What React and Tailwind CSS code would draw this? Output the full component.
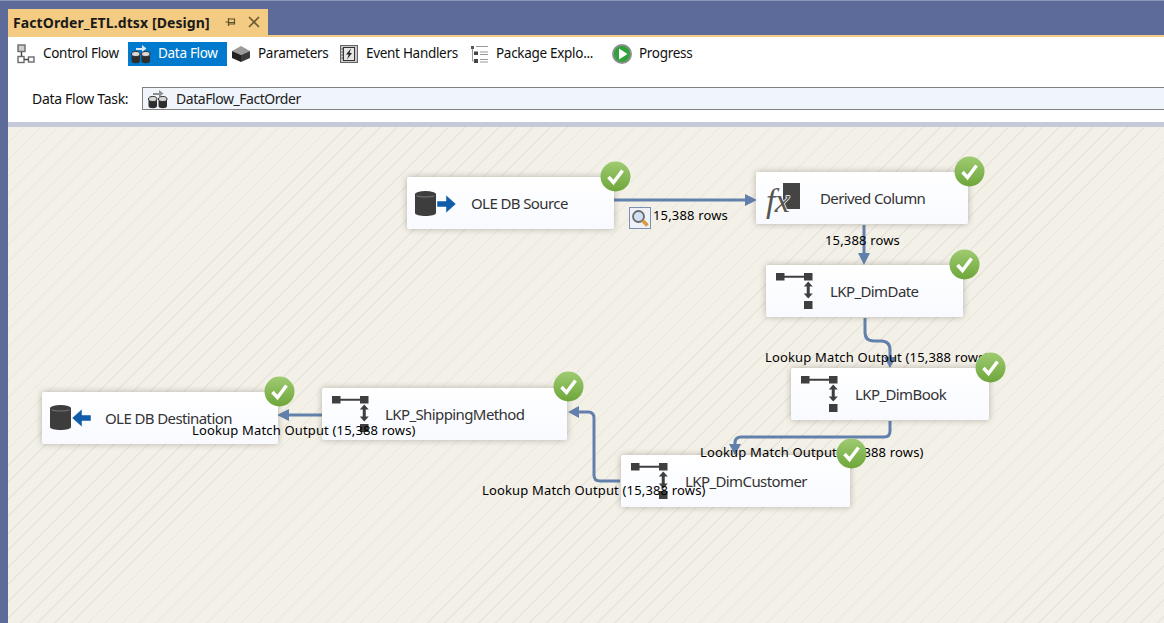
import React from "react";

const Cyl = ({ x = 0, y = 0, w = 14, h = 18, c = "#3a3a3a" }) => (
  <g>
    <path d={`M${x} ${y + 3}v${h - 6}c0 4 ${w} 4 ${w} 0v-${h - 6}z`} fill={c} />
    <ellipse cx={x + w / 2} cy={y + 3} rx={w / 2} ry={3} fill={c} />
    <path d={`M${x + 1.5} ${y + 4.5}c1 2 ${w - 4} 2 ${w - 3} 0`} fill="none" stroke="#8c8c8c" strokeWidth="0.8" />
  </g>
);

const ControlFlowIcon = () => (
  <svg width="18" height="20" viewBox="0 0 18 20" className="shrink-0">
    <g fill="#fff" stroke="#6a6a6a" strokeWidth="1.4">
      <rect x="1" y="1" width="7" height="6.5" fill="#cfcfcf" />
      <rect x="1" y="12.5" width="6" height="6" />
      <rect x="11.5" y="13" width="5.5" height="5" />
    </g>
    <path d="M4.5 8v4.5M7 15.5h4.5" stroke="#444" strokeWidth="1.4" />
  </svg>
);

const DataFlowIcon = ({ light }) => (
  <svg width="20" height="20" viewBox="0 0 20 20" className="shrink-0">
    <path d="M5 4h6V1l4.5 3.5L11 8V6H5z" fill={light ? "#dfe8f2" : "#8f8f8f"} />
    <g>
      <path d="M0.5 10v7c0 3 8.500 3 8.500 0v-7z" fill="#2e2e2e" />
      <ellipse cx="4.750" cy="10" rx="4.250" ry="2.500" fill="#d8d8d8" stroke="#2e2e2e" />
      <path d="M10.500 10v7c0 3 8.500 3 8.500 0v-7z" fill="#2e2e2e" />
      <ellipse cx="14.750" cy="10" rx="4.250" ry="2.500" fill="#d8d8d8" stroke="#2e2e2e" />
    </g>
  </svg>
);

const ParamsIcon = () => (
  <svg width="20" height="18" viewBox="0 0 20 18" className="shrink-0">
    <path d="M1 6l9-5 9 5-9 4z" fill="#9a9a9a" />
    <path d="M1 6l9 4v7l-9-4z" fill="#222" />
    <path d="M19 6l-9 4v7l9-4z" fill="#3c3c3c" />
  </svg>
);

const EventIcon = () => (
  <svg width="18" height="18" viewBox="0 0 18 18" className="shrink-0">
    <rect x="0.5" y="0.5" width="17" height="17" fill="#c9c9c9" stroke="#666" />
    <rect x="3.500" y="2.500" width="11" height="13" fill="#e6e6e6" stroke="#333" />
    <path d="M11 3.500L6 9.500h2.800L7 14.500l5-6.500H9.500z" fill="#222" />
    <path d="M1.500 4h2M1.500 7h2M1.500 10h2M1.500 13h2" stroke="#444" />
  </svg>
);

const PackageIcon = () => (
  <svg width="19" height="19" viewBox="0 0 19 19" className="shrink-0">
    <rect x="1" y="1" width="3" height="3" fill="#555" />
    <rect x="4" y="6.500" width="4" height="3.500" fill="#444" />
    <rect x="4" y="14" width="4" height="4" fill="#444" />
    <path d="M6 1.500h12M10 7h8M10 9.500h8M10 14.500h8M10 17h8" stroke="#999" strokeWidth="1.2" />
    <path d="M2.500 4v12h2" stroke="#999" fill="none" />
  </svg>
);

const ProgressIcon = () => (
  <svg width="20" height="20" viewBox="0 0 20 20" className="shrink-0">
    <circle cx="10" cy="10" r="10" fill="#8f8f8f" />
    <circle cx="10" cy="10" r="8" fill="#2fa33a" />
    <path d="M7 4.500l8.500 5.500L7 15.500z" fill="#fff" />
  </svg>
);

const SourceIcon = () => (
  <svg width="42" height="28" viewBox="0 0 42 28" className="absolute left-[7px] top-[13px]">
    <Cyl x={1} y={1} w={21} h={25} c="#3d3d3d" />
    <path d="M23 11h9V5l10 9-10 9v-6h-9z" fill="#0f5ca8" stroke="#fff" strokeWidth="0.5" />
  </svg>
);

const DestIcon = () => (
  <svg width="42" height="28" viewBox="0 0 42 28" className="absolute left-[7px] top-[12px]">
    <Cyl x={1} y={1} w={21} h={25} c="#3d3d3d" />
    <path d="M42 11h-9V5l-10 9 10 9v-6h9z" fill="#0f5ca8" stroke="#fff" strokeWidth="0.5" />
  </svg>
);

const FxIcon = () => (
  <svg width="40" height="44" viewBox="0 0 40 44" className="absolute left-[7px] top-[5px]">
    <rect x="20" y="6" width="17" height="26" fill="#444" />
    <text
      x="3"
      y="35"
      fontFamily="'Liberation Serif', serif"
      fontStyle="italic"
      fontSize="34"
      fill="#555"
      stroke="#fff"
      strokeWidth="1.4"
      paintOrder="stroke"
    >
      fx
    </text>
  </svg>
);

const LookupIcon = ({ className }) => (
  <svg width="40" height="40" viewBox="0 0 40 40" className={className}>
    <rect x="2" y="2" width="8.500" height="7.500" fill="#3f3f3f" />
    <rect x="30" y="2" width="8.500" height="7.500" fill="#3f3f3f" />
    <path d="M9 5.750h22" stroke="#3f3f3f" strokeWidth="2" />
    <path d="M34.250 10.500l-4.500 5h3v7h-3l4.500 5 4.500-5h-3v-7h3z" fill="#3f3f3f" />
    <rect x="30" y="30" width="8.500" height="8" fill="#3f3f3f" />
  </svg>
);

const Check = ({ className }) => (
  <svg width="31" height="31" viewBox="0 0 31 31" className={`absolute ${className}`}>
    <defs>
      <linearGradient id="chk" x1="0" y1="0" x2="0" y2="1">
        <stop offset="0" stopColor="#9fcb72" />
        <stop offset="1" stopColor="#6ea63a" />
      </linearGradient>
    </defs>
    <circle cx="15.500" cy="15.500" r="15" fill="url(#chk)" />
    <path d="M8.500 16l5 5.500 9-12" fill="none" stroke="#fff" strokeWidth="3.500" />
  </svg>
);

const Node = ({ className, label, children }) => (
  <div
    className={`absolute h-[52px] rounded-[2px] bg-gradient-to-b from-white to-[#f8faff] shadow-[0_0_6px_rgba(90,85,70,0.4)] flex items-center text-[#333] text-[15px] font-['Noto_Sans','Open_Sans',sans-serif] tracking-[-0.6px] ${className}`}
  >
    {children}
    <span>{label}</span>
  </div>
);

const Label = ({ className, children }) => (
  <span
    className={`absolute whitespace-nowrap h-4 leading-4 text-[13px] text-black font-['Noto_Sans','Open_Sans',sans-serif] tracking-[0.16px] ${className}`}
  >
    {children}
  </span>
);

const Tab = ({ icon, label, active, className }) => (
  <div
    className={`h-6 flex items-center text-[13.5px] tracking-[-0.3px] ${active ? "bg-[#007acc] text-white" : "text-[#111]"} ${className}`}
  >
    {icon}
    <span className="relative -top-px">{label}</span>
  </div>
);

const LINE = "#6280ac";

export default function App() {
  return (
    <div className="h-[623px] w-full overflow-hidden bg-[#5c6b99] border-t border-t-[#8d98b8] pl-2 pt-2 flex flex-col font-['Noto_Sans','Open_Sans',sans-serif]">
      <div className="h-[26px] w-[260px] bg-[#f3cb82] flex items-center pl-[5px] shrink-0">
        <span className="font-bold text-[14px] tracking-[0.1px] text-[#1a1a1a] w-[212px] whitespace-nowrap">
          FactOrder_ETL.dtsx [Design]
        </span>
        <svg width="12" height="12" viewBox="0 0 12 12" className="shrink-0">
          <path d="M0.500 6h3M3.500 2v8M3.500 3h6v5h-6M3.500 6.500h6" fill="none" stroke="#5e4f2b" strokeWidth="1.200" />
        </svg>
        <svg width="12" height="12" viewBox="0 0 12 12" className="ml-[11px] shrink-0">
          <path d="M1 1l10 10M11 1L1 11" stroke="#6b5a33" strokeWidth="1.600" />
        </svg>
      </div>
      <div className="flex-1 min-h-0 flex flex-col bg-white border-t-2 border-t-[#f3cb82]">
        <div className="h-[29px] pt-[5px] flex items-start shrink-0 pl-[9px]">
          <Tab icon={<ControlFlowIcon />} label="Control Flow" className="w-[111px] gap-2" />
          <Tab icon={<DataFlowIcon light />} label="Data Flow" active className="w-[99px] pl-[3px] gap-[7px]" />
          <Tab icon={<ParamsIcon />} label="Parameters" className="w-[113px] pl-[4px] gap-[7px]" />
          <Tab icon={<EventIcon />} label="Event Handlers" className="w-[130px] gap-2" />
          <Tab icon={<PackageIcon />} label="Package Explo..." className="w-[142px] gap-[7px]" />
          <Tab icon={<ProgressIcon />} label="Progress" className="gap-[7px]" />
        </div>
        <div className="h-[56px] flex items-start shrink-0 pl-6 pt-[21px]">
          <span className="w-[110px] h-[22px] leading-[24px] text-[14px] tracking-[-0.3px] text-[#111]">Data Flow Task:</span>
          <div className="flex-1 h-[23px] bg-[#f0f4fb] border border-[#808080] border-r-0 flex items-center pl-[5px] gap-[8px] text-[14px] tracking-[-0.45px] text-[#222]">
            <DataFlowIcon />
            <span>DataFlow_FactOrder</span>
          </div>
        </div>
        <div className="h-[5px] bg-[#c5cadb] shrink-0" />
        <div className="relative flex-1 min-h-0 bg-[#f3f0e8] bg-[repeating-linear-gradient(135deg,#f3f0e8_0px,#f3f0e8_11px,#e8e5dc_11px,#e8e5dc_12px)]">
          <svg width="1156" height="496" viewBox="8 127 1156 496" className="absolute inset-0">
            <g fill="none" stroke={LINE} strokeWidth="3">
              <path d="M614 200H746" />
              <path d="M864 225V256" />
              <path d="M865 318V332q0 9 9 9h7q9 0 9 9V360" />
              <path d="M890 421V431q0 6-6 6H741q-6 0-6 6V447" />
              <path d="M620 481H600q-6 0-6-6V418q0-6-6-6H578" />
              <path d="M322 415H288" />
            </g>
            <g fill={LINE}>
              <path d="M757 200l-12-6v12z" />
              <path d="M864 265l-6-12h12z" />
              <path d="M890 368l-6-11h12z" />
              <path d="M735 455l-6-11h12z" />
              <path d="M568 412l11-6v12z" />
              <path d="M277 415l12-6v12z" />
            </g>
          </svg>

          <Node className="left-[399px] top-[50px] w-[207px] pl-[64px]" label="OLE DB Source"><SourceIcon /></Node>
          <Node className="left-[748px] top-[45px] w-[212px] pl-[64px]" label="Derived Column"><FxIcon /></Node>
          <Node className="left-[758px] top-[138px] w-[197px] pl-[64px]" label="LKP_DimDate"><LookupIcon className="absolute left-[8px] top-[6px]" /></Node>
          <Node className="left-[783px] top-[241px] w-[198px] pl-[64px]" label="LKP_DimBook"><LookupIcon className="absolute left-[8px] top-[6px]" /></Node>
          <Node className="left-[613px] top-[328px] w-[229px] pl-[64px]" label="LKP_DimCustomer"><LookupIcon className="absolute left-[8px] top-[6px]" /></Node>
          <Node className="left-[314px] top-[261px] w-[245px] pl-[63px]" label="LKP_ShippingMethod"><LookupIcon className="absolute left-[8px] top-[6px]" /></Node>
          <Node className="left-[34px] top-[265px] w-[236px] pl-[63px]" label="OLE DB Destination"><DestIcon /></Node>

          <svg width="22" height="22" viewBox="0 0 22 22" className="absolute left-[621px] top-[80px]">
            <rect x="0.500" y="0.500" width="21" height="21" fill="#eef1f7" stroke="#7f8fb0" />
            <circle cx="9.500" cy="9.500" r="5.500" fill="#cfe0f2" stroke="#6a6a6a" strokeWidth="1.800" />
            <path d="M13.500 13.500l5 5" stroke="#d79a3c" strokeWidth="3.500" />
          </svg>

          <Label className="left-[645px] top-[80px]">15,388 rows</Label>
          <Label className="left-[817px] top-[105px]">15,388 rows</Label>
          <Label className="left-[757px] top-[222px]">Lookup Match Output (15,388 rows)</Label>
          <Label className="left-[692px] top-[317px]">Lookup Match Output (15,388 rows)</Label>
          <Label className="left-[474px] top-[355px]">Lookup Match Output (15,388 rows)</Label>
          <Label className="left-[184px] top-[295px]">Lookup Match Output (15,388 rows)</Label>

          <Check className="left-[592px] top-[34px]" />
          <Check className="left-[946px] top-[29px]" />
          <Check className="left-[941px] top-[122px]" />
          <Check className="left-[967px] top-[225px]" />
          <Check className="left-[828px] top-[311px]" />
          <Check className="left-[545px] top-[244px]" />
          <Check className="left-[256px] top-[249px]" />
        </div>
      </div>
    </div>
  );
}
